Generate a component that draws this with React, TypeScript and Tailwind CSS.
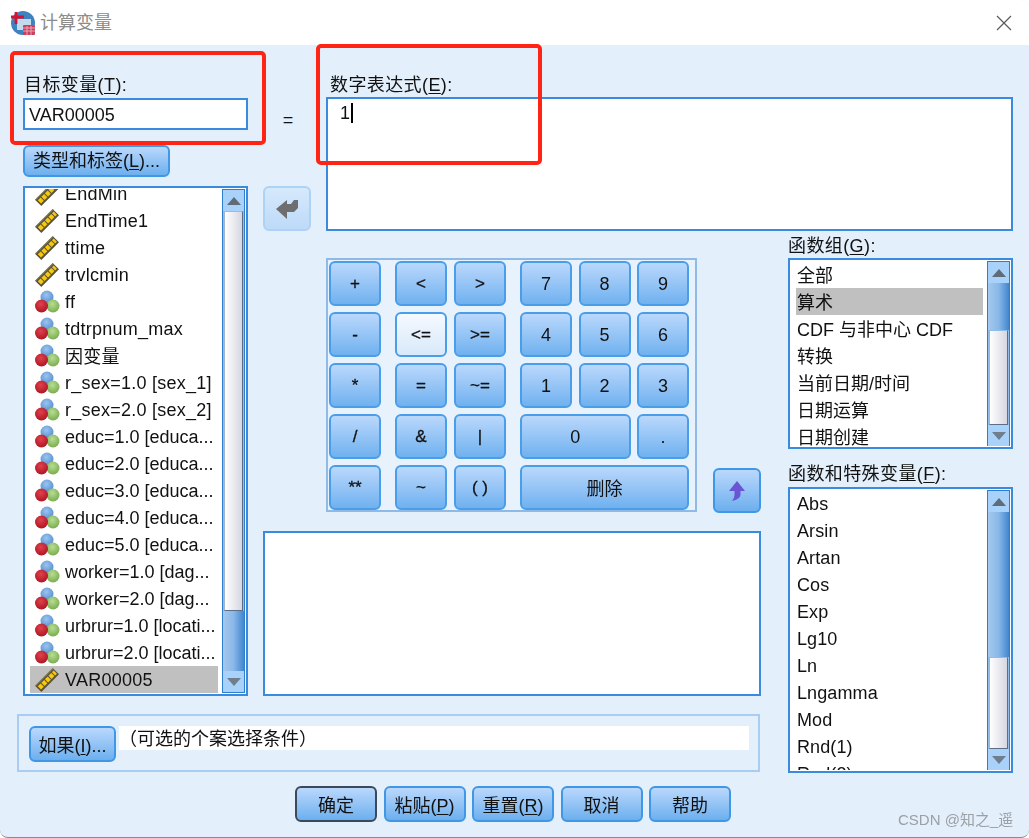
import React from "react";

const btnBase =
  "flex items-center justify-center rounded-[6px] border-2 bg-gradient-to-b from-[#bad8fc] to-[#6cafee] text-[#111]";
const btn = `${btnBase} border-[#3f97e6]`;

const Mnemonic = ({ text, k, after = "", cls = "tracking-[0.4px]" }: { text: string; k: string; after?: string; cls?: string }) => (
  <span className={cls}>
    {text}(<span className="underline underline-offset-2">{k}</span>){after}
  </span>
);

const Ruler = () => (
  <svg width="24" height="24" viewBox="0 0 24 24" className="shrink-0 overflow-visible">
    <g transform="rotate(-45 12 12)">
      <rect x="-0.5" y="7.5" width="25" height="9" fill="#5a5338" />
      <path d="M1 10h4v4.5H1zM6 10h4v4.5H6zM11 10h4v4.5h-4zM16 10h4v4.5h-4zM21 10h2.5v4.5H21z" fill="#f6c80e" />
      <path d="M-0.5 8h25" stroke="#8d8a70" strokeWidth="1" />
    </g>
  </svg>
);

const Balls = () => (
  <svg width="24" height="24" viewBox="0 0 24 24" className="shrink-0 overflow-visible">
    <defs>
      <radialGradient id="ballBlue" cx="0.45" cy="0.35" r="0.7">
        <stop offset="0" stopColor="#9cc4ee" />
        <stop offset="1" stopColor="#4f8bd0" />
      </radialGradient>
      <radialGradient id="ballRed" cx="0.45" cy="0.35" r="0.7">
        <stop offset="0" stopColor="#e2404e" />
        <stop offset="1" stopColor="#a8141f" />
      </radialGradient>
      <radialGradient id="ballGreen" cx="0.45" cy="0.35" r="0.7">
        <stop offset="0" stopColor="#b9dd93" />
        <stop offset="1" stopColor="#74a94a" />
      </radialGradient>
    </defs>
    <circle cx="12" cy="7" r="6.5" fill="url(#ballBlue)" />
    <circle cx="18" cy="16" r="6.5" fill="url(#ballGreen)" />
    <circle cx="6.5" cy="16" r="6.5" fill="url(#ballRed)" />
  </svg>
);

const Tri = ({ down = false }: { down?: boolean }) => (
  <svg width="14" height="8" viewBox="0 0 14 8">
    <path d={down ? "M0 0h14L7 8z" : "M7 0l7 8H0z"} fill={down ? "#6f7d8c" : "#5f6b78"} />
  </svg>
);

// before = blue track above the thumb, thumb = white part, the rest is blue track again
const Scrollbar = ({ before, thumb }: { before: number; thumb: number }) => (
  <div className="flex h-full w-[23px] shrink-0 flex-col border border-[#2f7fd0] bg-[#8fbdea]">
    <div className="flex h-[21px] shrink-0 items-center justify-center bg-[#a9d2fb]">
      <Tri />
    </div>
    <div
      className="shrink-0 bg-gradient-to-r from-[#a5c8ee] via-[#8ab8e8] to-[#3f86cf]"
      style={{ height: before }}
    />
    <div
      className="mx-[1px] shrink-0 border border-b-[#5c6f86] border-l-[#9fb6cf] border-r-[#5c6f86] border-t-[#8fbdea] bg-gradient-to-r from-white to-[#d6d6e2]"
      style={{ height: thumb }}
    />
    <div className="flex-1 bg-gradient-to-r from-[#a5c8ee] via-[#8ab8e8] to-[#3f86cf]" />
    <div className="flex h-[21px] shrink-0 items-center justify-center bg-[#a9d2fb]">
      <Tri down />
    </div>
  </div>
);

const vars: [string, "r" | "b"][] = [
  ["EndMin", "r"],
  ["EndTime1", "r"],
  ["ttime", "r"],
  ["trvlcmin", "r"],
  ["ff", "b"],
  ["tdtrpnum_max", "b"],
  ["因变量", "b"],
  ["r_sex=1.0 [sex_1]", "b"],
  ["r_sex=2.0 [sex_2]", "b"],
  ["educ=1.0 [educa...", "b"],
  ["educ=2.0 [educa...", "b"],
  ["educ=3.0 [educa...", "b"],
  ["educ=4.0 [educa...", "b"],
  ["educ=5.0 [educa...", "b"],
  ["worker=1.0 [dag...", "b"],
  ["worker=2.0 [dag...", "b"],
  ["urbrur=1.0 [locati...", "b"],
  ["urbrur=2.0 [locati...", "b"],
  ["VAR00005", "r"],
];

const groups = ["全部", "算术", "CDF 与非中心 CDF", "转换", "当前日期/时间", "日期运算", "日期创建"];
const funcs = ["Abs", "Arsin", "Artan", "Cos", "Exp", "Lg10", "Ln", "Lngamma", "Mod", "Rnd(1)", "Rnd(2)"];

const PlainList = ({
  items,
  selected,
  before,
  thumb,
  height,
  textCls,
}: {
  items: string[];
  selected?: string;
  before: number;
  thumb: number;
  height: string;
  textCls: string;
}) => (
  <div className={`flex w-[225px] border-2 border-[#3a8ade] bg-white p-[1px] ${height}`}>
    <div className="flex-1 overflow-hidden pl-[5px] pr-[4px]">
      {items.map((t) => (
        <div key={t} className={`flex h-[27px] items-center pl-[1px] ${t === selected ? "bg-[#c0c0c0]" : ""}`}>
          <span className={textCls}>{t}</span>
        </div>
      ))}
    </div>
    <Scrollbar before={before} thumb={thumb} />
  </div>
);

const Calc = ({ label, cls = "", light = false }: { label: string; cls?: string; light?: boolean }) => (
  <div
    className={`flex h-[45px] items-center justify-center rounded-[6px] border-2 border-[#4a9de8] bg-gradient-to-b ${
      light ? "from-[#f5f9fe] to-[#d8e9fa]" : "from-[#bad8fc] to-[#6fb1ef]"
    } text-[#111] ${cls}`}
  >
    {label}
  </div>
);

export default function App() {
  return (
    <div className="relative h-[838px] w-[1029px] overflow-hidden bg-white text-[18px] leading-none text-[#111] [font-family:'Liberation_Sans','Noto_Sans_CJK_SC',sans-serif]">
      <div className="h-full overflow-hidden rounded-[8px] border-b border-[#8a8a8a] bg-[#e3effb] blur-[0.4px]">
        {/* title bar */}
        <div className="flex h-[45px] items-center bg-white pl-[11px] pr-[17px]">
          <svg width="24" height="24" viewBox="0 0 24 24">
            <circle cx="12" cy="12" r="12" fill="#3f82bf" />
            <rect x="6" y="8" width="14" height="11" fill="#c3d9ee" />
            <path d="M5 1v12M0 6h13" stroke="#d8122e" strokeWidth="2.8" />
            <rect x="12" y="14" width="12" height="10" rx="1" fill="#c93f5c" />
            <path d="M12 17h12M12 20h12M16 15v9M20 15v9" stroke="#eeb0bd" strokeWidth="0.9" />
          </svg>
          <span className="ml-[5px] text-[#8c8c8c]">计算变量</span>
          <svg width="16" height="16" viewBox="0 0 16 16" className="ml-auto">
            <path d="M1 1l14 14M15 1L1 15" stroke="#5a5a5a" strokeWidth="1.2" />
          </svg>
        </div>

        <div className="grid grid-cols-[263px_48px_450px_268px] grid-rows-[186px_465px_77px]">
          {/* variable column */}
          <div className="row-span-2 pl-[23px] pt-[28px]">
            <div className="flex h-[24px] items-center pb-[1px] pl-[1px]">
              <Mnemonic text="目标变量" k="T" after=":" />
            </div>
            <div className="mt-[1px] flex h-[32px] w-[225px] items-center border-2 border-[#3a8ade] bg-white pl-[4px] pt-[2px]">
              VAR00005
            </div>
            <div className={`${btn} mt-[15px] h-[32px] w-[147px]`}>
              <Mnemonic text="类型和标签" k="L" after="..." cls="" />
            </div>
            <div className="mt-[9px] flex h-[510px] w-[225px] border-2 border-[#3a8ade] bg-white p-[1px]">
              <div className="flex-1 overflow-hidden pl-[4px] pr-[4px]">
                <div className="-mt-[9px]">
                  {vars.map(([name, kind]) => (
                    <div
                      key={name}
                      className={`flex h-[27px] items-center gap-[6px] overflow-hidden whitespace-nowrap pl-[5px] ${
                        name === "VAR00005" ? "bg-[#c0c0c0]" : ""
                      }`}
                    >
                      {kind === "r" ? <Ruler /> : <Balls />}
                      <span
                        className={`${name === "因变量" ? "pt-[3px]" : ""} ${
                          name.endsWith("...") ? "" : "tracking-[0.25px]"
                        }`}
                      >
                        {name}
                      </span>
                    </div>
                  ))}
                </div>
              </div>
              <Scrollbar before={0} thumb={400} />
            </div>
          </div>

          {/* equals and move button */}
          <div className="pt-[63px]">
            <div className="flex h-[24px] items-center justify-center pl-[2px] text-[18px]">=</div>
            <div className="mt-[54px] flex h-[45px] items-center justify-center rounded-[6px] border-2 border-[#aed2f5] bg-gradient-to-b from-[#d6e9fc] to-[#bddaf8]">
              <svg width="23" height="22" viewBox="0 0 23 22">
                <path d="M0 11L11 2v4h4l3-4h4v8l-4 4h-7v7z" fill="#6e6e70" />
              </svg>
            </div>
          </div>

          {/* expression */}
          <div className="col-span-2 pl-[15px] pr-[16px] pt-[28px]">
            <div className="flex h-[24px] items-center pl-[4px]">
              <Mnemonic text="数字表达式" k="E" after=":" />
            </div>
            <div className="flex h-[134px] items-start border-2 border-[#3a8ade] bg-white pl-[12px] pt-[4px]">
              <span className="leading-[20px]">1</span>
              <span className="ml-[1px] h-[20px] w-[1.5px] bg-black" />
            </div>
          </div>

          {/* calculator, result box */}
          <div className="col-span-2 pl-0 pt-[27px]">
            <div className="flex items-start">
              <div className="ml-[63px] flex h-[254px] w-[371px] gap-[14px] border-2 border-[#8fbae6] bg-[#e8f2fc] pl-[1px] pt-[1px]">
                <div className="grid w-[52px] grid-cols-1 gap-y-[6px] text-[17px] [-webkit-text-stroke:0.3px_#111]">
                  {["+", "-", "*", "/", "**"].map((s) => (
                    <Calc key={s} label={s} />
                  ))}
                </div>
                <div className="grid w-[111px] grid-cols-2 gap-x-[7px] gap-y-[6px] text-[17px] [-webkit-text-stroke:0.3px_#111]">
                  {["<", ">", "<=", ">=", "=", "~=", "&", "|", "~", "( )"].map((s) => (
                    <Calc key={s} label={s} light={s === "<="} />
                  ))}
                </div>
                <div className="grid w-[169px] grid-cols-3 gap-x-[6.5px] gap-y-[6px]">
                  {["7", "8", "9", "4", "5", "6", "1", "2", "3"].map((s) => (
                    <Calc key={s} label={s} />
                  ))}
                  <Calc label="0" cls="col-span-2" />
                  <Calc label="." />
                  <Calc label="删除" cls="col-span-3 pt-[3px]" />
                </div>
              </div>
              <div className={`${btn} ml-[16px] mt-[210px] h-[45px] w-[48px]`}>
                <svg width="16" height="20" viewBox="0 0 16 20">
                  <path d="M8 0l8 10h-4.5v4Q11 18 3 20q2.5-3 2.5-6v-4H0z" fill="#6a55d4" />
                </svg>
              </div>
            </div>
            <div className="mt-[18px] h-[165px] w-[498px] border-2 border-[#3a8ade] bg-white" />
          </div>

          {/* function lists */}
          <div className="row-span-2 pl-[27px] pt-[3px]">
            <div className="flex h-[23px] items-center">
              <Mnemonic text="函数组" k="G" after=":" />
            </div>
            <div className="mt-[1px]">
              <PlainList
                items={groups}
                selected="算术"
                before={47}
                thumb={95}
                height="h-[191px]"
                textCls="pt-[3px]"
              />
            </div>
            <div className="mt-[13px] flex h-[23px] items-center">
              <Mnemonic text="函数和特殊变量" k="F" after=":" />
            </div>
            <div className="mt-[2px]">
              <PlainList
                items={funcs}
                before={145}
                thumb={92}
                height="h-[286px]"
                textCls="tracking-[0.1px]"
              />
            </div>
          </div>

          {/* if row */}
          <div className="col-span-3 pl-[17px] pt-[18px]">
            <div className="flex h-[58px] w-[743px] items-start border-2 border-[#a9cdf2] pl-[10px] pt-[10px]">
              <div className={`${btn} h-[36px] w-[87px] pt-[4px]`}>
                <Mnemonic text="如果" k="I" after="..." cls="" />
              </div>
              <div className="ml-[3px] flex h-[24px] w-[630px] items-center bg-white pt-[2px]">
                （可选的个案选择条件）
              </div>
            </div>
          </div>
        </div>

        {/* footer buttons */}
        <div className="flex gap-[6.5px] pl-[295px] pt-[13px]">
          <div className={`${btnBase} h-[36px] w-[82px] border-[#3b4a5a] pt-[4px]`}>确定</div>
          <div className={`${btn} h-[36px] w-[82px] pt-[4px]`}>
            <Mnemonic text="粘贴" k="P" cls="" />
          </div>
          <div className={`${btn} h-[36px] w-[82px] pt-[4px]`}>
            <Mnemonic text="重置" k="R" cls="" />
          </div>
          <div className={`${btn} h-[36px] w-[82px] pt-[4px]`}>取消</div>
          <div className={`${btn} h-[36px] w-[82px] pt-[4px]`}>帮助</div>
        </div>
      </div>

      {/* annotation rectangles drawn on top of the screenshot */}
      <div className="absolute left-[10px] top-[51px] h-[94px] w-[256px] rounded-[5px] border-[4px] border-[#ff2414]" />
      <div className="absolute left-[316px] top-[44px] h-[121px] w-[226px] rounded-[5px] border-[4px] border-[#ff2414]" />

      {/* watermark */}
      <div className="absolute left-[898px] top-[812px] text-[15px] text-[#9aa0a6]">CSDN @知之_遥</div>
    </div>
  );
}
